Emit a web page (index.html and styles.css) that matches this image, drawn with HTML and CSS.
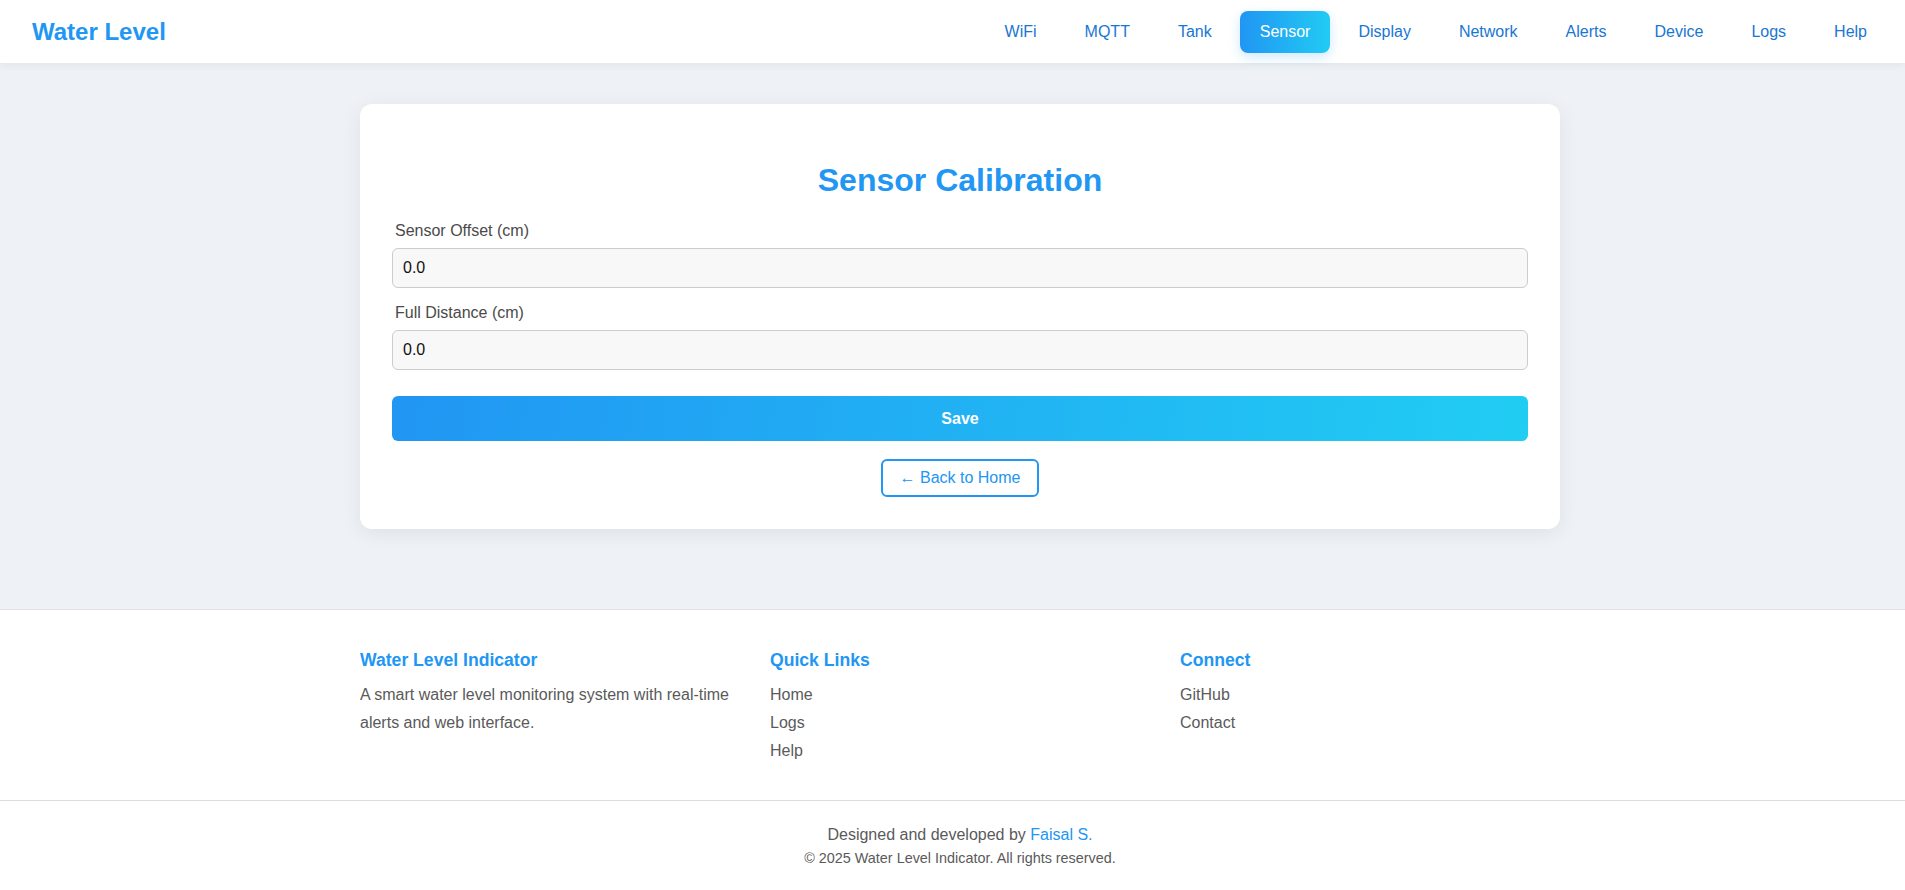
FILE: index.html
```html
<!DOCTYPE html>
<html lang="en">
<head>
<meta charset="utf-8">
<title>Sensor Calibration - Water Level</title>
<link rel="stylesheet" href="styles.css">
</head>
<body>
<header class="topbar">
  <div class="brand">Water Level</div>
  <nav class="nav">
    <a class="nav-link" href="#">WiFi</a>
    <a class="nav-link" href="#">MQTT</a>
    <a class="nav-link" href="#">Tank</a>
    <a class="nav-link active" href="#">Sensor</a>
    <a class="nav-link" href="#">Display</a>
    <a class="nav-link" href="#">Network</a>
    <a class="nav-link" href="#">Alerts</a>
    <a class="nav-link" href="#">Device</a>
    <a class="nav-link" href="#">Logs</a>
    <a class="nav-link" href="#">Help</a>
  </nav>
</header>

<main class="main">
  <section class="card">
    <h1 class="card-title">Sensor Calibration</h1>
    <form class="form">
      <div class="form-group">
        <label class="label" for="offset">Sensor Offset (cm)</label>
        <input class="input" id="offset" type="text" value="0.0">
      </div>
      <div class="form-group">
        <label class="label" for="full">Full Distance (cm)</label>
        <input class="input" id="full" type="text" value="0.0">
      </div>
      <button class="btn-save" type="button">Save</button>
    </form>
    <div class="back-row">
      <a class="btn-back" href="#">← Back to Home</a>
    </div>
  </section>
</main>

<footer class="footer">
  <div class="footer-grid">
    <div class="footer-col">
      <h3 class="footer-heading">Water Level Indicator</h3>
      <p class="footer-text">A smart water level monitoring system with real-time alerts and web interface.</p>
    </div>
    <div class="footer-col">
      <h3 class="footer-heading">Quick Links</h3>
      <ul class="footer-links">
        <li><a href="#">Home</a></li>
        <li><a href="#">Logs</a></li>
        <li><a href="#">Help</a></li>
      </ul>
    </div>
    <div class="footer-col">
      <h3 class="footer-heading">Connect</h3>
      <ul class="footer-links">
        <li><a href="#">GitHub</a></li>
        <li><a href="#">Contact</a></li>
      </ul>
    </div>
  </div>
  <div class="footer-bottom">
    <p class="credit">Designed and developed by <a href="#">Faisal S.</a></p>
    <p class="copyright">© 2025 Water Level Indicator. All rights reserved.</p>
  </div>
</footer>
</body>
</html>
```

FILE: styles.css
```css
* {
  box-sizing: border-box;
}

html, body {
  margin: 0;
  padding: 0;
}

body {
  font-family: "Liberation Sans", Arial, Helvetica, sans-serif;
  background: #eef2f7;
  color: #333;
}

a {
  text-decoration: none;
}

/* Header */
.topbar {
  height: 63px;
  background: #ffffff;
  display: flex;
  align-items: center;
  justify-content: space-between;
  padding: 0 18px 0 32px;
  box-shadow: 0 2px 8px rgba(0, 0, 0, 0.06);
  position: relative;
  z-index: 2;
}

.brand {
  font-size: 24px;
  font-weight: bold;
  color: #2196f3;
}

.nav {
  display: flex;
  gap: 8px;
}

.nav-link {
  display: block;
  padding: 12px 20px;
  font-size: 16px;
  line-height: 18px;
  color: #1976d2;
  border-radius: 8px;
}

.nav-link.active {
  color: #ffffff;
  background: linear-gradient(90deg, #2196f3, #21cbf3);
  box-shadow: 0 4px 12px rgba(33, 150, 243, 0.22);
}

/* Main */
.main {
  padding: 41px 0 80px 15px;
}

.card {
  width: 1200px;
  margin: 0 auto;
  background: #ffffff;
  border-radius: 12px;
  padding: 32px;
  box-shadow: 0 4px 20px rgba(0, 0, 0, 0.07);
}

.card-title {
  margin: 26px 0 23px;
  text-align: center;
  font-size: 32px;
  line-height: 37px;
  font-weight: bold;
  color: #2196f3;
}

.form-group {
  margin-bottom: 16px;
}

.label {
  display: block;
  padding-left: 3px;
  margin-bottom: 8px;
  font-size: 16px;
  line-height: 18px;
  color: #4a4a4a;
}

.input {
  display: block;
  width: 100%;
  height: 40px;
  padding: 0 10px;
  font-family: inherit;
  font-size: 16px;
  color: #111;
  background: #f8f8f8;
  border: 1px solid #cccccc;
  border-radius: 6px;
}

.btn-save {
  display: block;
  width: 100%;
  height: 45px;
  margin-top: 26px;
  border: none;
  border-radius: 6px;
  background: linear-gradient(100deg, #2196f3, #21cdf3);
  color: #ffffff;
  font-family: inherit;
  font-size: 16px;
  font-weight: bold;
}

.back-row {
  display: flex;
  justify-content: center;
  margin-top: 18px;
}

.btn-back {
  display: inline-block;
  padding: 8px 17px;
  font-size: 16px;
  line-height: 18px;
  color: #2196f3;
  border: 2px solid #2196f3;
  border-radius: 6px;
  background: #fff;
}

/* Footer */
.footer {
  background: #ffffff;
  border-top: 1px solid #dfe3e8;
}

.footer-grid {
  width: 1215px;
  margin: 0 auto;
  display: grid;
  grid-template-columns: repeat(3, 1fr);
  gap: 30px;
  padding: 40px 0 35px 15px;
}

.footer-heading {
  margin: 0 0 11px;
  font-size: 17.6px;
  line-height: 20px;
  font-weight: bold;
  color: #2196f3;
}

.footer-text {
  margin: 0;
  font-size: 16px;
  line-height: 28px;
  color: #5a5a5a;
}

.footer-links {
  list-style: none;
  margin: 0;
  padding: 0;
}

.footer-links li {
  font-size: 16px;
  line-height: 28px;
}

.footer-links a {
  color: #5a5a5a;
}

.footer-bottom {
  border-top: 1px solid #dddddd;
  padding: 22px 0 21px 15px;
  text-align: center;
  color: #5a5a5a;
}

.credit {
  margin: 0;
  font-size: 16px;
  line-height: 24px;
}

.credit a {
  color: #2196f3;
}

.copyright {
  margin: 0;
  font-size: 14.4px;
  line-height: 22px;
}
```
